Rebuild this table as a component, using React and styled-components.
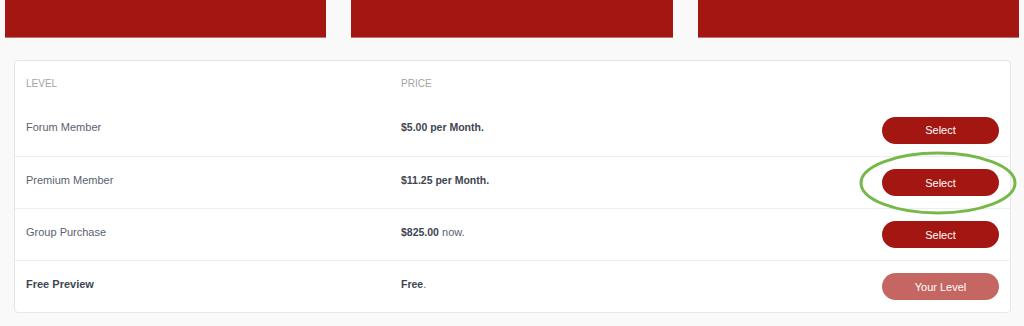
import React from "react";
import styled, { createGlobalStyle } from "styled-components";

const GlobalStyle = createGlobalStyle`
    html, body {
        margin: 0;
        padding: 0;
        background: #f9f9f9;
        font-family: "Liberation Sans", Arial, sans-serif;
    }
`;

const Page = styled.div`
    width: 1024px;
    height: 326px;
    padding: 0 5px;
    box-sizing: border-box;
    position: relative;
    overflow: hidden;
`;

const Banners = styled.div`
    display: flex;
    gap: 25px;
    height: 38px;
`;

const Banner = styled.div`
    flex: 1;
    background: #a31611;
    border-bottom: 1px solid #c9706d;
`;

const Card = styled.div`
    margin: 22px 8px 0 9px;
    background: #fff;
    border: 1px solid #e6e6e6;
    border-radius: 4px;
`;

const Row = styled.div`
    display: grid;
    grid-template-columns: 375px 1fr 117px;
    align-items: center;
    padding: 0 11px;
    height: ${props => (props.header ? "43px" : "52px")};
    border-top: ${props => (props.divided ? "1px solid #eeeeee" : "none")};
    box-sizing: border-box;
`;

const HeadCell = styled.div`
    font-size: 10px;
    color: #a3a3a3;
    text-transform: uppercase;
    padding-top: 2px;
`;

const Cell = styled.div`
    font-size: 11px;
    color: ${props => (props.strong ? "#3d4652" : "#5a6270")};
    font-weight: ${props => (props.strong ? 700 : 400)};
    margin-top: -6px;

    b {
        font-size: 10.5px;
        color: #3d4652;
    }
`;

const Button = styled.button`
    width: 117px;
    height: 27px;
    border: none;
    border-radius: 14px;
    background: ${props => (props.current ? "#c56663" : "#a31611")};
    color: #fff;
    font-family: inherit;
    font-size: 11px;
    padding: 0;
    cursor: pointer;
`;

const Highlight = styled.svg`
    position: absolute;
    left: 858px;
    top: 150px;
`;

const levels = [
    { name: "Forum Member", price: "$5.00", rest: " per Month.", allBold: true },
    { name: "Premium Member", price: "$11.25", rest: " per Month.", allBold: true },
    { name: "Group Purchase", price: "$825.00", rest: " now." },
    { name: "Free Preview", price: "Free", rest: ".", current: true },
];

const App = () => {
    return (
        <Page>
            <GlobalStyle />
            <Banners>
                <Banner />
                <Banner />
                <Banner />
            </Banners>
            <Card>
                <Row header>
                    <HeadCell>Level</HeadCell>
                    <HeadCell>Price</HeadCell>
                    <div />
                </Row>
                {levels.map((l, i) => (
                    <Row key={l.name} divided={i > 0}>
                        <Cell strong={l.current}>{l.name}</Cell>
                        <Cell>
                            {l.allBold ? <b>{l.price + l.rest}</b> : <><b>{l.price}</b>{l.rest}</>}
                        </Cell>
                        <Button current={l.current}>{l.current ? "Your Level" : "Select"}</Button>
                    </Row>
                ))}
            </Card>
            <Highlight width="160" height="66" viewBox="0 0 160 66">
                <ellipse cx="80" cy="33" rx="77" ry="30" fill="none" stroke="#77b84a" strokeWidth="3" />
            </Highlight>
        </Page>
    );
};

export default App;
